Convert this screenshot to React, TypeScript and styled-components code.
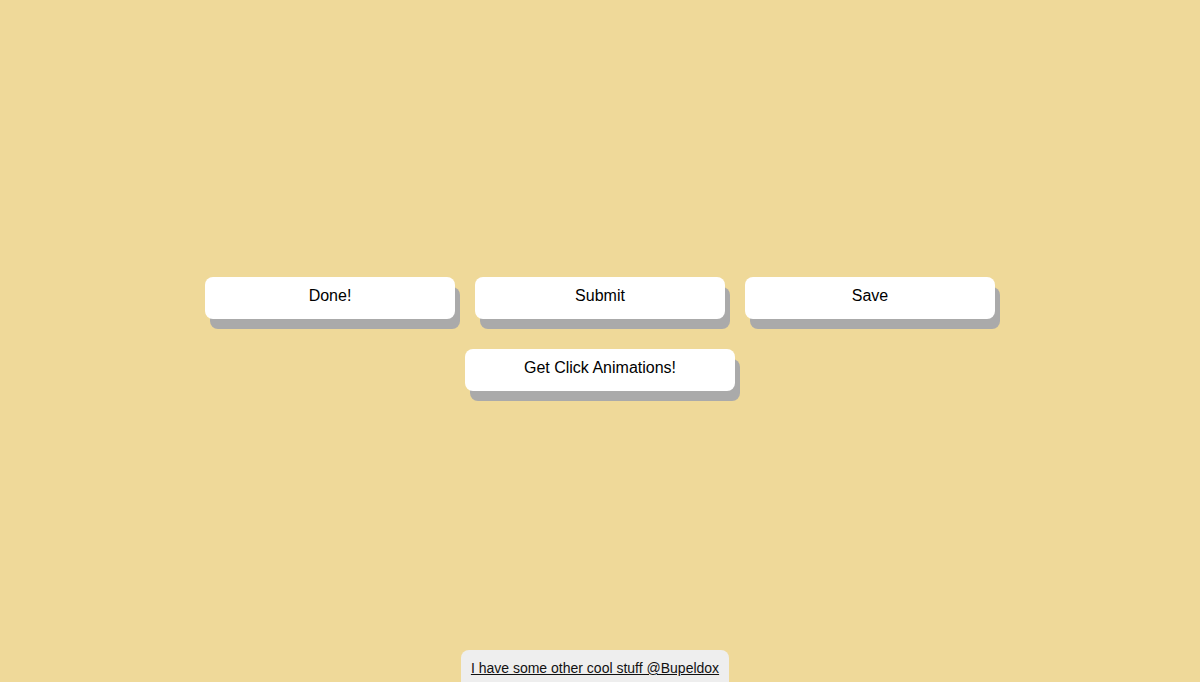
import React from 'react';
import styled, { createGlobalStyle } from 'styled-components';

const GlobalStyle = createGlobalStyle`
  html, body {
    margin: 0;
    padding: 0;
    background: #efd999;
    font-family: "Liberation Sans", Arial, sans-serif;
  }
`;

const Page = styled.div`
  height: 100vh;
  min-height: 682px;
  display: flex;
  flex-direction: column;
  align-items: center;
  overflow: hidden;
`;

const Buttons = styled.div`
  display: flex;
  flex-direction: column;
  align-items: center;
  gap: 30px;
  padding-top: 277px;
`;

const Row = styled.div`
  display: flex;
  gap: 20px;
`;

const Button = styled.button<{ $wide?: boolean }>`
  width: ${(p) => (p.$wide ? '270px' : '250px')};
  height: 42px;
  padding: 0 0 4px;
  border: none;
  border-radius: 8px;
  background: #fff;
  color: #000;
  font-family: "Liberation Sans", Arial, sans-serif;
  font-size: 16px;
  box-shadow: 5px 10px 0 #aaaaaa;
  cursor: pointer;

  &:active {
    transform: translate(5px, 10px);
    box-shadow: none;
  }
`;

const Footer = styled.div`
  margin-top: auto;
  margin-right: 10px;
  width: 268px;
  box-sizing: border-box;
  text-align: center;
  background: #eeeeee;
  border-radius: 8px 8px 0 0;
  padding: 10px 0 6px;
  font-size: 14px;
  line-height: 16px;

  a {
    color: #111;
    text-decoration: underline;
  }
`;

export default function App() {
  return (
    <>
      <GlobalStyle />
      <Page>
        <Buttons>
          <Row>
            <Button>Done!</Button>
            <Button>Submit</Button>
            <Button>Save</Button>
          </Row>
          <Button $wide>Get Click Animations!</Button>
        </Buttons>
        <Footer>
          <a href="#">I have some other cool stuff @Bupeldox</a>
        </Footer>
      </Page>
    </>
  );
}
